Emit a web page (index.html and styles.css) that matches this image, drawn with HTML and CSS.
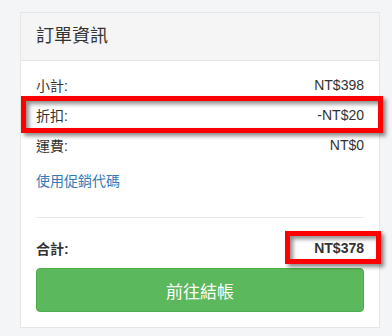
FILE: index.html
```html
<!DOCTYPE html>
<html lang="zh-Hant">
<head>
    <meta charset="UTF-8">
    <meta name="viewport" content="width=device-width, initial-scale=1.0">
    <title>訂單資訊</title>
    <link rel="stylesheet" href="styles.css">
</head>
<body>
    <div class="panel">
        <div class="panel-heading">訂單資訊</div>
        <div class="panel-body">
            <div class="row"><span>小計:</span><span>NT$398</span></div>
            <div class="row"><span>折扣:</span><span>-NT$20</span></div>
            <div class="row"><span>運費:</span><span>NT$0</span></div>
            <a class="promo" href="#">使用促銷代碼</a>
            <hr>
            <div class="row total"><span>合計:</span><span>NT$378</span></div>
            <button class="checkout-btn">前往結帳</button>
        </div>
    </div>

    <!-- annotation boxes -->
    <div class="mark mark-discount"></div>
    <div class="mark mark-total"></div>
</body>
</html>
```

FILE: styles.css
```css
body {
    margin: 0;
    background-color: #f4f5f7;
    font-family: "Liberation Sans", "Noto Sans CJK TC", sans-serif;
    color: #333;
    font-size: 14px;
}
.panel {
    margin: 12px 12px 0 20px;
    background-color: white;
    border: 1px solid #e6e6e6;
}
.panel-heading {
    height: 47px;
    line-height: 46px;
    padding: 0 15px;
    font-size: 18px;
    background-color: #f5f5f5;
    border-bottom: 1px solid #e6e6e6;
}
.panel-body {
    padding: 9px 15px 15px;
    display: flex;
    flex-direction: column;
}
.row {
    height: 30px;
    display: flex;
    justify-content: space-between;
    align-items: center;
}
.promo {
    margin-top: 10px;
    height: 22px;
    line-height: 22px;
    color: #337ab7;
    text-decoration: none;
    align-self: flex-start;
}
hr {
    width: 100%;
    margin: 25px 0 0;
    border: none;
    border-top: 1px solid #e8e8e8;
}
.total {
    margin-top: 15px;
    font-weight: bold;
}
.checkout-btn {
    margin-top: 5px;
    height: 44px;
    background-color: #5cb85c;
    border: 1px solid #4cae4c;
    border-radius: 4px;
    color: white;
    font-family: inherit;
    font-size: 17px;
}
.mark {
    position: absolute;
    border: 5px solid #ff0000;
    box-shadow: 3px 3px 4px rgba(0,0,0,0.45), inset 3px 3px 4px rgba(0,0,0,0.45);
}
.mark-discount {
    left: 21px;
    top: 96px;
    width: 352px;
    height: 27px;
}
.mark-total {
    left: 285px;
    top: 231px;
    width: 86px;
    height: 23px;
}
```
